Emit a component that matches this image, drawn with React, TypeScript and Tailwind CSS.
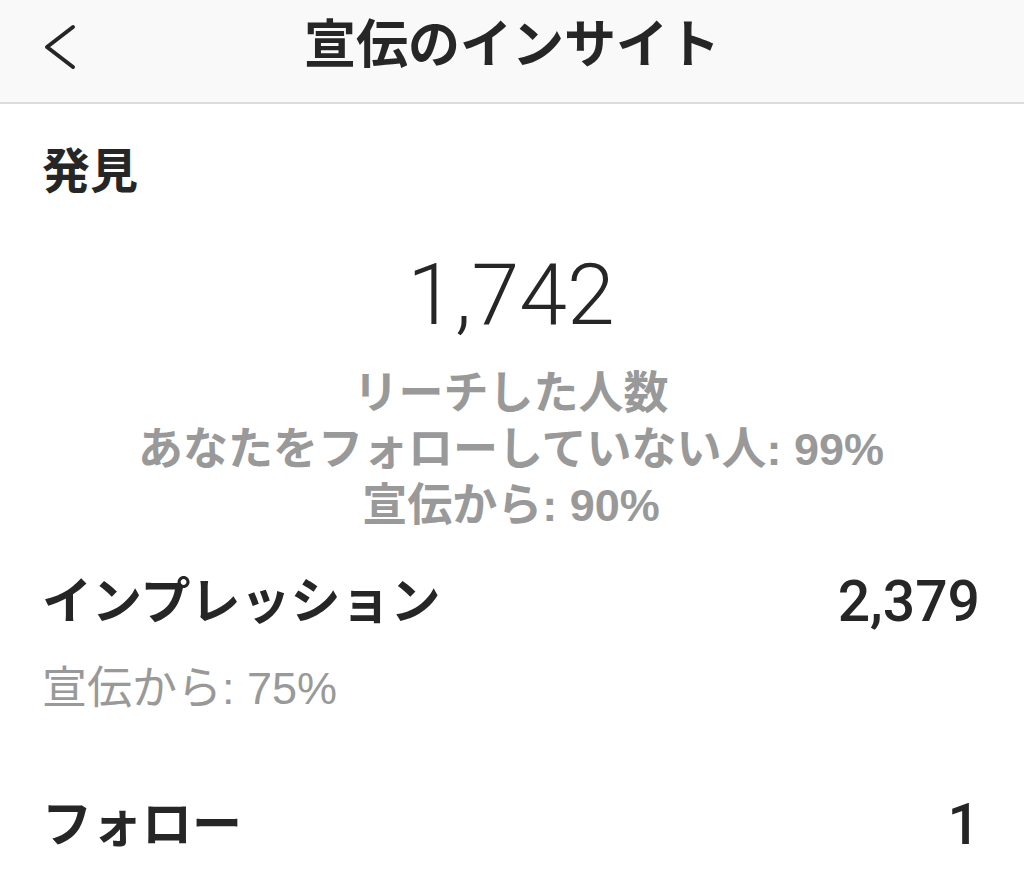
const jp = "font-['Liberation_Sans','Noto_Sans_CJK_JP',sans-serif]"

function BackArrow() {
  return (
    <svg width="36" height="46" viewBox="0 0 36 46" fill="none" className="text-[#262626]">
      <polyline points="31,3 5,23 31,43" stroke="currentColor" strokeWidth="4" strokeLinecap="round" strokeLinejoin="round" />
    </svg>
  )
}

function MetricRow({ label, value }: { label: string; value: string }) {
  return (
    <div className="flex items-center justify-between">
      <span className="text-[50px] leading-[60px] font-bold text-[#262626]">{label}</span>
      <span className="font-['Roboto',sans-serif] text-[57px] leading-[60px] font-medium text-[#262626]">{value}</span>
    </div>
  )
}

export default function App() {
  return (
    <div className={`min-h-screen w-[1024px] bg-white ${jp}`}>
      {/* Top bar */}
      <header className="grid h-[104px] grid-cols-[1fr_auto_1fr] items-center border-b-2 border-[#dcdcdc] bg-[#f9f9f9] pb-[12px]">
        <div className="pl-[42px] pt-[4px]">
          <BackArrow />
        </div>
        <h1 className="text-[52px] leading-[60px] font-bold text-[#262626]">宣伝のインサイト</h1>
        <div />
      </header>

      <main className="px-[42px] pr-[44px]">
        {/* Discovery */}
        <section className="pt-[38px]">
          <h2 className="text-[48px] leading-[60px] font-bold text-[#262626]">発見</h2>
          <div className="mt-[48px] flex flex-col items-center">
            <div className="font-['Roboto',sans-serif] text-[86px] leading-[90px] font-light text-[#262626]">1,742</div>
            <div className="mt-[26px] flex flex-col items-center text-[45px] leading-[56px] font-semibold text-[#999999]">
              <p>リーチした人数</p>
              <p>
                あなたをフォローしていない人: <span className="font-bold">99%</span>
              </p>
              <p>
                宣伝から: <span className="font-bold">90%</span>
              </p>
            </div>
          </div>
        </section>

        {/* Impressions */}
        <section className="mt-[38px]">
          <MetricRow label="インプレッション" value="2,379" />
          <p className="mt-[28px] text-[45px] leading-[57px] font-normal text-[#999999]">宣伝から: 75%</p>
        </section>

        {/* Follows */}
        <section className="mt-[78px]">
          <MetricRow label="フォロー" value="1" />
        </section>
      </main>
    </div>
  )
}
